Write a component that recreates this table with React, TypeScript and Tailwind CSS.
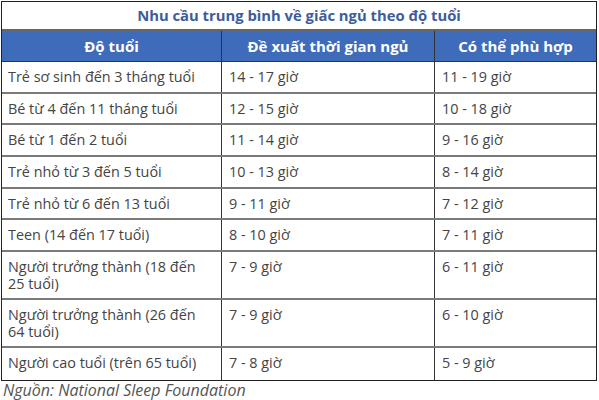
const rows: { age: string; rec: string; ok: string; tall?: boolean }[] = [
  { age: "Trẻ sơ sinh đến 3 tháng tuổi", rec: "14 - 17 giờ", ok: "11 - 19 giờ" },
  { age: "Bé từ 4 đến 11 tháng tuổi", rec: "12 - 15 giờ", ok: "10 - 18 giờ" },
  { age: "Bé từ 1 đến 2 tuổi", rec: "11 - 14 giờ", ok: "9 - 16 giờ" },
  { age: "Trẻ nhỏ từ 3 đến 5 tuổi", rec: "10 - 13 giờ", ok: "8 - 14 giờ" },
  { age: "Trẻ nhỏ từ 6 đến 13 tuổi", rec: "9 - 11 giờ", ok: "7 - 12 giờ" },
  { age: "Teen (14 đến 17 tuổi)", rec: "8 - 10 giờ", ok: "7 - 11 giờ" },
  { age: "Người trưởng thành (18 đến 25 tuổi)", rec: "7 - 9 giờ", ok: "6 - 11 giờ", tall: true },
  { age: "Người trưởng thành (26 đến 64 tuổi)", rec: "7 - 9 giờ", ok: "6 - 10 giờ", tall: true },
  { age: "Người cao tuổi (trên 65 tuổi)", rec: "7 - 8 giờ", ok: "5 - 9 giờ" },
];

export default function App() {
  return (
    <div className="w-[599px] h-[400px] overflow-hidden bg-white font-['Open_Sans',sans-serif] text-[#444]">
      <div className="ml-[1px] mt-[1px] w-[596px] border-[1.5px] border-[#222]">
        <div className="h-[29px] flex items-center justify-center text-[14.8px] font-bold text-[#3d5c9c] border-b-2 border-[#666]">
          Nhu cầu trung bình về giấc ngủ theo độ tuổi
        </div>
        <div className="h-[31px] grid grid-cols-[220px_213px_1fr] bg-[#3f6bbb] text-white text-[15px] font-bold border-b border-[#333]">
          <div className="flex items-center justify-center border-r-[1.5px] border-[#333]">Độ tuổi</div>
          <div className="flex items-center justify-center border-r-[1.5px] border-[#333]">Đề xuất thời gian ngủ</div>
          <div className="flex items-center justify-center">Có thể phù hợp</div>
        </div>
        {rows.map((r, i) => (
          <div
            key={i}
            className={
              "grid grid-cols-[220px_213px_1fr] text-[14.4px] leading-[17px] " +
              (r.tall ? "h-[48px] " : "h-[31.7px] ") +
              (i < rows.length - 1 ? "border-b-2 border-[#7a7a7a]" : "")
            }
          >
            <div className="pl-[6px] pr-[24px] pt-[6px] border-r-[1.5px] border-[#333]">{r.age}</div>
            <div className="pl-[7px] pt-[6px] border-r-[1.5px] border-[#333]">{r.rec}</div>
            <div className="pl-[7px] pt-[6px]">{r.ok}</div>
          </div>
        ))}
      </div>
      <div className="pl-[3px] italic text-[16px] leading-[18px] text-[#555]">Nguồn: National Sleep Foundation</div>
    </div>
  );
}
